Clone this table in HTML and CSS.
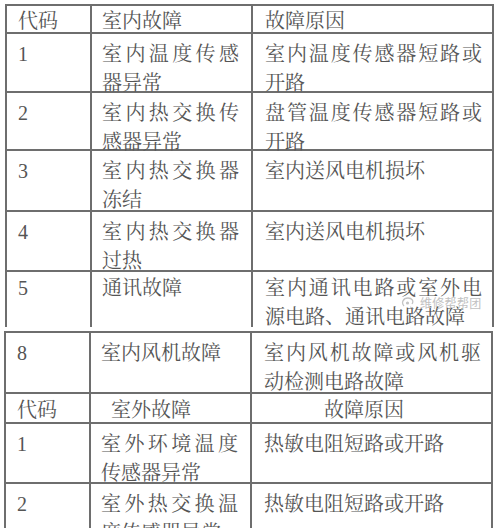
FILE: index.html
```html
<!DOCTYPE html>
<html lang="zh-CN">
<head>
<meta charset="utf-8">
<link rel="stylesheet" href="styles.css">
</head>
<body>
<div class="page">
  <div class="part part1">
    <div class="tbl">
      <div class="c c1 hd">代码</div><div class="c c2 hd">室内故障</div><div class="c c3 hd">故障原因</div>
      <div class="c c1 r59">1</div><div class="c c2 r59">室内温度传感器异常</div><div class="c c3 r59">室内温度传感器短路或开路</div>
      <div class="c c1 r58">2</div><div class="c c2 r58">室内热交换传感器异常</div><div class="c c3 r58">盘管温度传感器短路或开路</div>
      <div class="c c1 r61">3</div><div class="c c2 r61">室内热交换器冻结</div><div class="c c3 r61">室内送风电机损坏</div>
      <div class="c c1 r60">4</div><div class="c c2 r60">室内热交换器过热</div><div class="c c3 r60">室内送风电机损坏</div>
      <div class="c c1 r60 tight">5</div><div class="c c2 r60 tight">通讯故障</div><div class="c c3 r60 tight wm-host">室内通讯电路或室外电源电路、通讯电路故障<span class="wm"><svg class="wm-logo" width="15" height="13" viewBox="0 0 15 13"><path d="M3 10 C0 7 2 2 7 2 C11 2 13 5 11 8" fill="none" stroke="#c4c4c4" stroke-width="1.3"/><circle cx="6.5" cy="7" r="1.6" fill="#c4c4c4"/><path d="M9 11 L12 12" stroke="#c4c4c4" stroke-width="1.2"/></svg><span class="wm-text">维修帮帮团</span></span></div>
    </div>
  </div>
  <div class="part part2">
    <div class="tbl">
      <div class="c c1 r61">8</div><div class="c c2 r61">室内风机故障</div><div class="c c3 r61">室内风机故障或风机驱动检测电路故障</div>
      <div class="c c1 hd2">代码</div><div class="c c2 hd2 ind2">室外故障</div><div class="c c3 hd2 ind3">故障原因</div>
      <div class="c c1 r60">1</div><div class="c c2 r60">室外环境温度传感器异常</div><div class="c c3 r60">热敏电阻短路或开路</div>
      <div class="c c1 r60">2</div><div class="c c2 r60">室外热交换温度传感器异常</div><div class="c c3 r60">热敏电阻短路或开路</div>
    </div>
  </div>
</div>
</body>
</html>
```
FILE: styles.css
```css
html, body {
  margin: 0;
  padding: 0;
  background: #fff;
}
.page {
  width: 500px;
  height: 528px;
  overflow: hidden;
  padding-top: 4px;
  box-sizing: border-box;
  font-family: "Liberation Serif", "Noto Serif CJK SC", "Noto Sans CJK SC", serif;
  color: #555;
  font-size: 20px;
}
.part {
  margin-left: 5px;
  overflow: hidden;
}
.part1 {
  height: 323px;
}
.part2 {
  margin-top: 4px;
  margin-left: 4px;
}
.tbl {
  display: grid;
  grid-template-columns: 85px 161px 241px;
  border-left: 2px solid #6e6e6e;
  border-top: 2px solid #6e6e6e;
  width: max-content;
}
.c {
  box-sizing: border-box;
  border-right: 2px solid #6e6e6e;
  border-bottom: 2px solid #6e6e6e;
  line-height: 29px;
  padding-top: 6px;
  text-align: justify;
  text-justify: inter-character;
}
.c1 { padding-left: 11px; padding-right: 10px; }
.c2 { padding-left: 10px; padding-right: 12px; }
.c3 { padding-left: 12px; padding-right: 10px; }
.hd { height: 28px; padding-top: 2px; line-height: 27px; }
.hd2 { height: 30px; padding-top: 2px; line-height: 29px; }
.ind2 { padding-left: 20px; }
.ind3 { padding-left: 72px; }
.r58 { height: 58px; }
.r59 { height: 59px; }
.r60 { height: 60px; }
.r61 { height: 61px; }
.tight { padding-top: 2px; }
.wm-host { position: relative; }
.wm {
  position: absolute;
  left: 148px;
  top: 24px;
  display: flex;
  align-items: center;
  gap: 4px;
  line-height: 13px;
}
.wm-text {
  font-family: "Noto Sans CJK SC", sans-serif;
  font-size: 12px;
  color: #c2c2c2;
  letter-spacing: 0.3px;
}
```
